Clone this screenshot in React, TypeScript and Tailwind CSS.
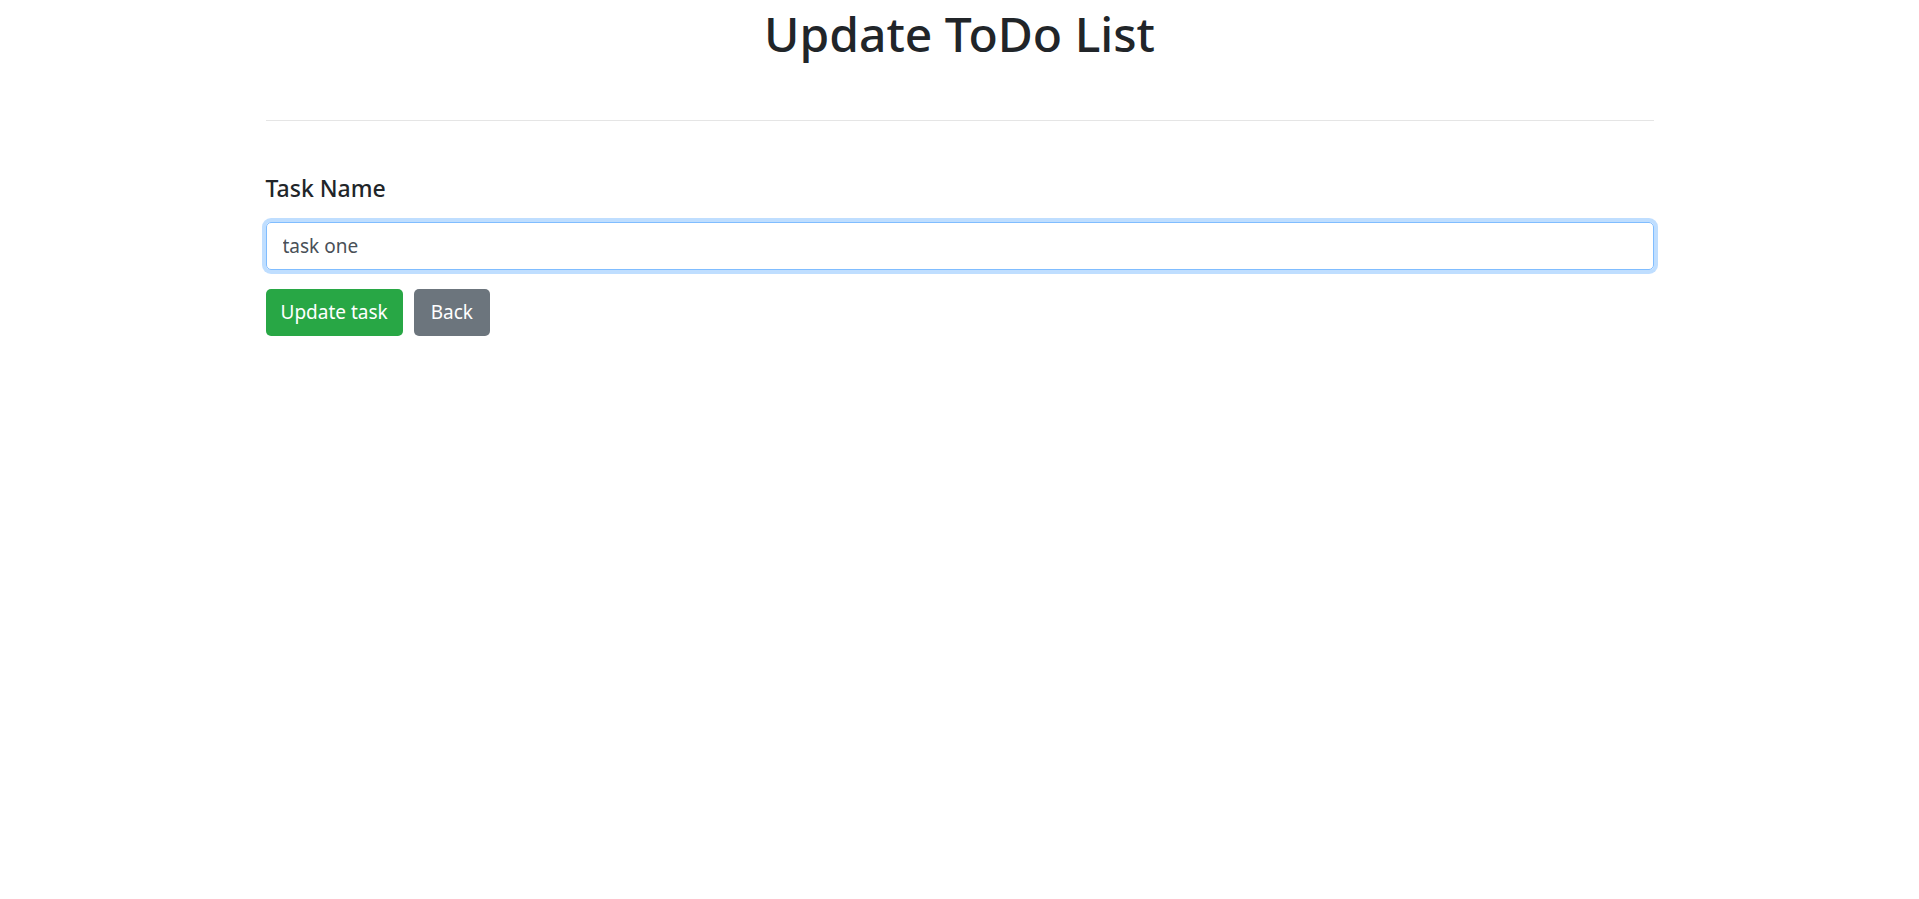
export default function App() {
  return (
    <div className="min-h-screen bg-white text-[#212529] font-['Noto_Sans',sans-serif]">
      <h1 className="pt-[2px] text-center text-[48px] leading-[64px] font-medium">Update ToDo List</h1>
      <div className="w-[1388px] mx-auto">
        <hr className="mt-[54px] border-0 border-t border-[#e5e5e5]" />
        <form className="mt-[51px]" onSubmit={(e) => e.preventDefault()}>
          <label className="block text-[23px] leading-[32px] font-medium text-[#212529]">Task Name</label>
          <input
            defaultValue="task one"
            className="mt-[18px] block w-full h-[48px] px-4 text-[19px] text-[#495057] border border-[#80bdff] rounded-[5px] outline-none shadow-[0_0_0_4px_rgba(0,123,255,0.25)]"
          />
          <div className="mt-[19px] flex gap-[11px]">
            <button type="submit" className="h-[47px] px-[15px] text-[19px] text-white bg-[#28a745] rounded-[5px]">
              Update task
            </button>
            <button type="button" className="h-[47px] px-[17px] text-[19px] text-white bg-[#6c757d] rounded-[5px]">
              Back
            </button>
          </div>
        </form>
      </div>
    </div>
  );
}
